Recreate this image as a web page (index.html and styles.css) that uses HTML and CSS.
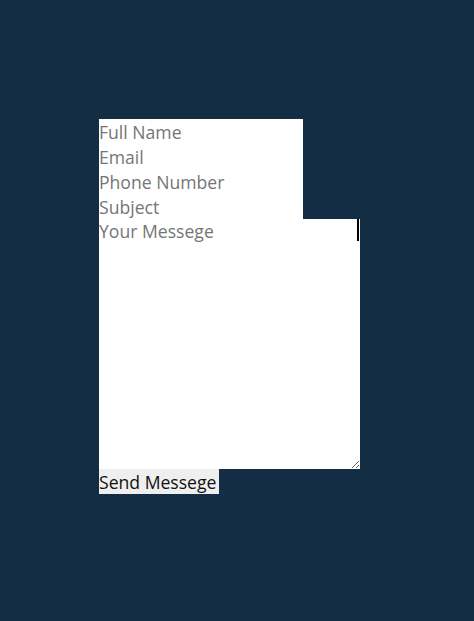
FILE: index.html
```html
<!DOCTYPE html>
<html>
<head>
<meta charset="utf-8">
<link rel="stylesheet" href="styles.css">
</head>
<body>
<form class="contact-form">
  <input class="field" type="text" placeholder="Full Name">
  <input class="field" type="email" placeholder="Email">
  <input class="field" type="text" placeholder="Phone Number">
  <input class="field" type="text" placeholder="Subject">
  <div class="message-wrap">
    <textarea class="message" placeholder="Your Messege"></textarea>
  </div>
  <button class="send" type="button">Send Messege</button>
</form>
</body>
</html>
```
FILE: styles.css
```css
html, body {
  margin: 0;
  padding: 0;
  background: #132d44;
  height: 100%;
}
.contact-form {
  display: flex;
  flex-direction: column;
  align-items: flex-start;
  padding: 119px 0 0 99px;
}
.field, .message, .send {
  font-family: "Open Sans", sans-serif;
  font-size: 17.6px;
  margin: 0;
  border: none;
  outline: none;
  box-sizing: border-box;
  padding: 0;
}
.field {
  width: 204px;
  height: 25px;
  background: #fff;
  color: #333;
}
.field::placeholder, .message::placeholder {
  color: #757575;
}
.message-wrap {
  position: relative;
  width: 261px;
  height: 250px;
}
.message-wrap::after {
  content: "";
  position: absolute;
  right: 1px;
  top: 0;
  width: 2px;
  height: 22px;
  background: #000;
}
.message {
  display: block;
  width: 261px;
  height: 250px;
  background: #fff;
  resize: vertical;
  line-height: 25px;
}
.send {
  width: 120px;
  height: 25px;
  background: #efefef;
  color: #111;
  text-align: left;
  white-space: nowrap;
}
```
